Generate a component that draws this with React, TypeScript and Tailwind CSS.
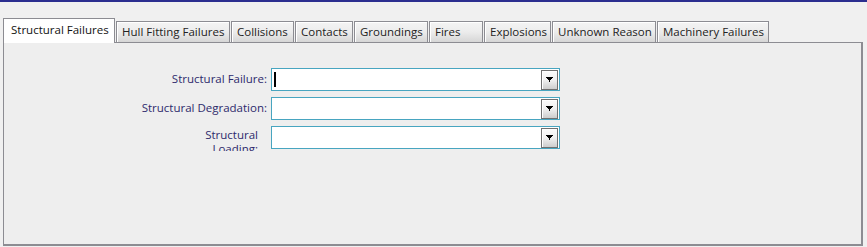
import React from "react"

interface Tab {
  label: string
  width: number
}

const tabs: Tab[] = [
  { label: "Hull Fitting Failures", width: 114 },
  { label: "Collisions", width: 63 },
  { label: "Contacts", width: 58 },
  { label: "Groundings", width: 74 },
  { label: "Fires", width: 54 },
  { label: "Explosions", width: 67 },
  { label: "Unknown Reason", width: 104 },
  { label: "Machinery Failures", width: 112 },
]

function DropArrow() {
  return (
    <svg width="7" height="5" viewBox="0 0 7 5" shapeRendering="crispEdges">
      <rect x="0" y="0" width="7" height="1" fill="#000" />
      <rect x="1" y="1" width="5" height="1" fill="#000" />
      <rect x="2" y="2" width="3" height="1" fill="#000" />
      <rect x="3" y="3" width="1" height="2" fill="#000" />
    </svg>
  )
}

function ComboBox({ focused }: { focused?: boolean }) {
  return (
    <div className="flex h-[23px] w-[289px] items-center justify-between border border-[#48a5c0] bg-white">
      <div className="ml-[2px] h-[15px] w-[2px]">{focused && <div className="h-full w-[2px] bg-black" />}</div>
      <div className="mr-px flex h-[20px] w-[17px] items-center justify-center border border-[#707070] bg-linear-to-b from-[#fbfbfb] via-[#f0f0f0] to-[#cdcdcd] shadow-[inset_1px_1px_0_#ffffff]">
        <DropArrow />
      </div>
    </div>
  )
}

export default function App() {
  return (
    <div
      className="h-[247px] w-[867px] overflow-hidden border-t-2 border-[#2b2e8f] bg-[#f0f0f0] text-[11.5px] text-[#222]"
      style={{ fontFamily: '"Open Sans", "Noto Sans", sans-serif' }}
    >
      <div className="mt-[16px] flex items-end pl-[3px]">
        <div className="relative z-10 -mb-px flex h-[25px] w-[112px] items-center border border-b-0 border-[#8c8c92] bg-white pb-[2px] pl-[7px] text-[#111]">
          Structural Failures
        </div>
        {tabs.map((t) => (
          <div
            key={t.label}
            className="ml-px flex h-[21px] items-center border border-b-0 border-[#8c8c92] bg-linear-to-b from-[#f4f4f4] via-[#ececec] to-[#d6d6d6] pl-[5px] shadow-[inset_1px_1px_0_#ffffff]"
            style={{ width: t.width }}
          >
            {t.label}
          </div>
        ))}
      </div>
      <div className="ml-[3px] h-[204px] w-[860px] border-t border-r-2 border-b-2 border-l border-[#8c8c92] bg-[#eeeeee]">
        <div className="ml-[96px] mt-[25px] grid grid-cols-[167px_289px] gap-x-[4px] gap-y-[6px] text-[#2d2a6c]">
          <div className="flex h-[23px] items-center justify-end pb-[2px]">Structural Failure:</div>
          <ComboBox focused />
          <div className="flex h-[23px] items-center justify-end pb-[2px]">Structural Degradation:</div>
          <ComboBox />
          <div className="flex h-[25px] justify-end overflow-hidden pr-[9px] pt-[2px]">
            <div className="w-[62px] text-right leading-[14px]">Structural Loading:</div>
          </div>
          <ComboBox />
        </div>
      </div>
    </div>
  )
}
